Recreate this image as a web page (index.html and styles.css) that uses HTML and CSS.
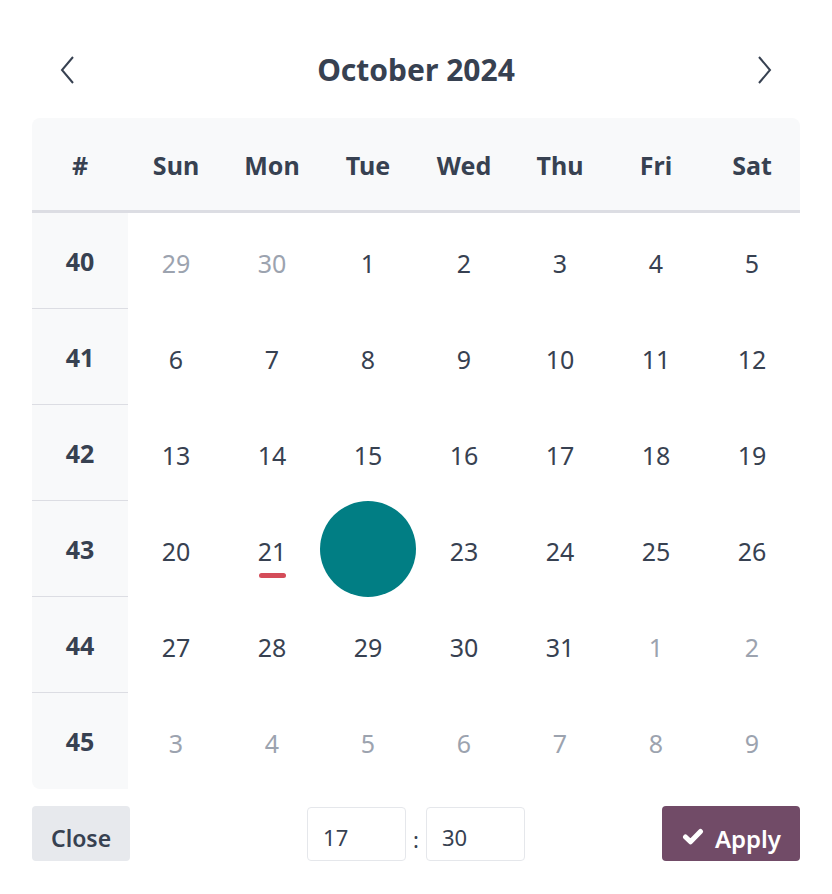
FILE: index.html
```html
<!DOCTYPE html>
<html lang="en">
<head>
    <meta charset="UTF-8">
    <meta name="viewport" content="width=device-width, initial-scale=1.0">
    <title>Date picker</title>
    <link rel="stylesheet" href="styles.css">
</head>
<body>
    <div class="picker">
        <div class="picker-header">
            <button class="nav-btn" aria-label="Previous month">
                <svg width="20" height="30" viewBox="0 0 20 30"><path d="M15 2 L4 15 L15 28" fill="none" stroke="#374151" stroke-width="2"/></svg>
            </button>
            <div class="month-title">October 2024</div>
            <button class="nav-btn" aria-label="Next month">
                <svg width="20" height="30" viewBox="0 0 20 30"><path d="M5 2 L16 15 L5 28" fill="none" stroke="#374151" stroke-width="2"/></svg>
            </button>
        </div>

        <div class="calendar">
            <div class="head week-head">#</div>
            <div class="head">Sun</div>
            <div class="head">Mon</div>
            <div class="head">Tue</div>
            <div class="head">Wed</div>
            <div class="head">Thu</div>
            <div class="head">Fri</div>
            <div class="head head-last">Sat</div>

            <div class="week">40</div>
            <div class="day muted">29</div>
            <div class="day muted">30</div>
            <div class="day">1</div>
            <div class="day">2</div>
            <div class="day">3</div>
            <div class="day">4</div>
            <div class="day">5</div>

            <div class="week">41</div>
            <div class="day">6</div>
            <div class="day">7</div>
            <div class="day">8</div>
            <div class="day">9</div>
            <div class="day">10</div>
            <div class="day">11</div>
            <div class="day">12</div>

            <div class="week">42</div>
            <div class="day">13</div>
            <div class="day">14</div>
            <div class="day">15</div>
            <div class="day">16</div>
            <div class="day">17</div>
            <div class="day">18</div>
            <div class="day">19</div>

            <div class="week">43</div>
            <div class="day">20</div>
            <div class="day today">21</div>
            <div class="day"><span class="selected">22</span></div>
            <div class="day">23</div>
            <div class="day">24</div>
            <div class="day">25</div>
            <div class="day">26</div>

            <div class="week">44</div>
            <div class="day">27</div>
            <div class="day">28</div>
            <div class="day">29</div>
            <div class="day">30</div>
            <div class="day">31</div>
            <div class="day muted">1</div>
            <div class="day muted">2</div>

            <div class="week week-last">45</div>
            <div class="day muted">3</div>
            <div class="day muted">4</div>
            <div class="day muted">5</div>
            <div class="day muted">6</div>
            <div class="day muted">7</div>
            <div class="day muted">8</div>
            <div class="day muted">9</div>
        </div>

        <div class="picker-footer">
            <button class="btn btn-close">Close</button>
            <div class="time">
                <input class="time-input" type="text" value="17">
                <span class="colon">:</span>
                <input class="time-input" type="text" value="30">
            </div>
            <button class="btn btn-apply">
                <svg width="22" height="17" viewBox="0 0 22 17"><path d="M3.5 9 L8.5 13.8 L18.5 3.5" fill="none" stroke="#fff" stroke-width="5" stroke-linecap="round" stroke-linejoin="round"/></svg>
                Apply
            </button>
        </div>
    </div>
</body>
</html>
```

FILE: styles.css
```css
body {
    margin: 0;
    background: #fff;
    font-family: "Noto Sans", "Open Sans", sans-serif;
    color: #374151;
}

.picker {
    padding: 40px 32px 0 32px;
}

.picker-header {
    display: flex;
    align-items: center;
    justify-content: space-between;
    height: 60px;
    margin-bottom: 18px;
}

.nav-btn {
    background: none;
    border: none;
    padding: 0 26px;
    height: 60px;
    display: flex;
    align-items: center;
    cursor: pointer;
}

.month-title {
    font-size: 30px;
    font-weight: 700;
    margin-top: -2px;
}

.calendar {
    display: grid;
    grid-template-columns: repeat(8, 96px);
    grid-auto-rows: 96px;
    grid-template-rows: 95px;
    font-size: 25px;
}

.head {
    display: flex;
    align-items: center;
    justify-content: center;
    background: #f8f9fa;
    font-weight: 700;
    border-bottom: 3px solid #dcdde3;
    padding-top: 2px;
}

.week-head {
    border-top-left-radius: 8px;
}

.head-last {
    border-top-right-radius: 8px;
}

.week {
    display: flex;
    align-items: center;
    justify-content: center;
    background: #f8f9fa;
    font-weight: 700;
    border-bottom: 1px solid #dcdde3;
}

.week-last {
    border-bottom: none;
    border-bottom-left-radius: 8px;
}

.day {
    display: flex;
    align-items: center;
    justify-content: center;
    position: relative;
    padding-top: 3px;
}

.muted {
    color: #9ca3af;
}

.today::after {
    content: "";
    position: absolute;
    left: 50%;
    top: 72px;
    width: 27px;
    height: 5px;
    margin-left: -13px;
    border-radius: 3px;
    background: #d44c59;
}

.selected {
    width: 96px;
    height: 96px;
    margin-top: -3px;
    border-radius: 50%;
    background: #017e84;
    color: #017e84;
    display: flex;
    align-items: center;
    justify-content: center;
}

.picker-footer {
    display: grid;
    grid-template-columns: 1fr auto 1fr;
    align-items: center;
    margin-top: 17px;
}

.btn {
    height: 55px;
    border: none;
    border-radius: 4px;
    font-family: inherit;
    font-size: 23px;
    font-weight: 600;
    padding: 9px 19px 0 19px;
    cursor: pointer;
    display: flex;
    align-items: center;
    gap: 11px;
}

.btn-close {
    justify-self: start;
    background: #e7e9ed;
    color: #374151;
}

.btn-apply {
    justify-self: end;
    background: #714b67;
    color: #fff;
    font-size: 24px;
    padding-left: 20px;
    padding-right: 19px;
}

.btn-apply svg {
    margin-top: -3px;
}

.time {
    display: flex;
    align-items: center;
    gap: 7px;
}

.time-input {
    width: 99px;
    height: 54px;
    box-sizing: border-box;
    border: 1px solid #e5e7eb;
    border-radius: 4px;
    font-family: inherit;
    font-size: 22px;
    color: #374151;
    padding: 6px 0 0 15px;
}

.colon {
    font-size: 22px;
    padding-top: 10px;
}
```
